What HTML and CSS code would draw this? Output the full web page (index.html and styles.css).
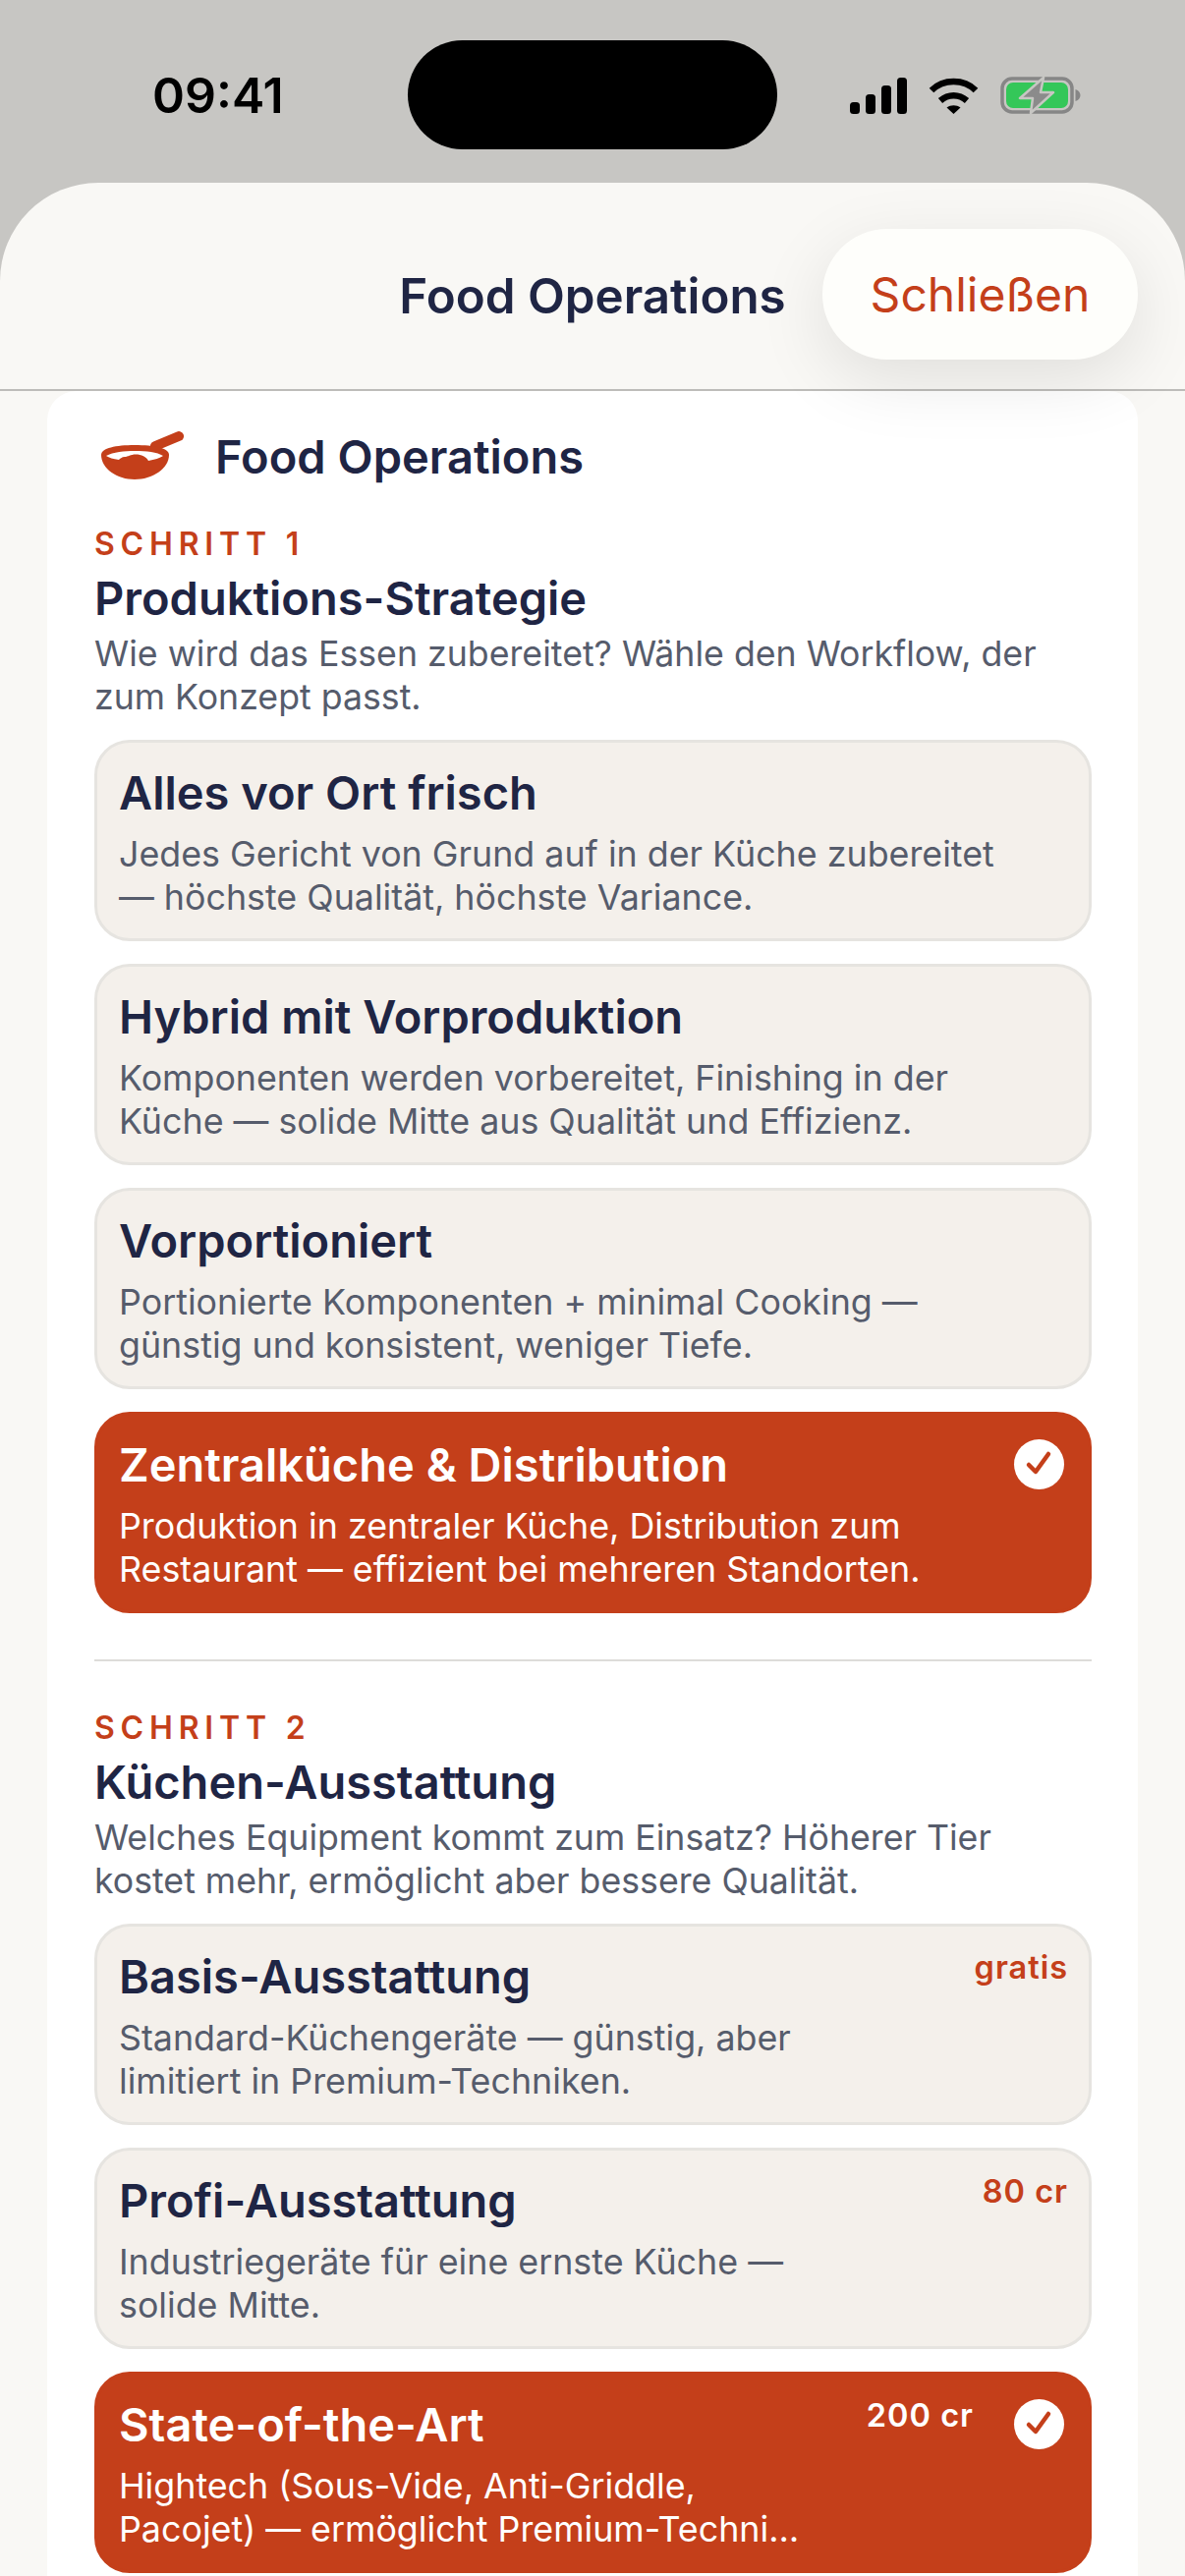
FILE: index.html
```html
<!DOCTYPE html>
<html lang="de">
  <head>
    <meta charset="UTF-8" />
    <meta name="viewport" content="width=device-width, initial-scale=1.0" />
    <title>Food Operations</title>
    <link rel="stylesheet" href="styles.css">
  </head>
  <body>
    <!-- Statusleiste -->
    <div class="status-bar">
      <div class="status-left"><span class="time">09:41</span></div>
      <div class="island"></div>
      <div class="status-right">
        <svg class="icon-signal" viewBox="0 0 58 37">
          <rect x="0" y="25" width="10" height="12" rx="3.5" />
          <rect x="16" y="17" width="10" height="20" rx="3.5" />
          <rect x="32" y="8" width="10" height="29" rx="3.5" />
          <rect x="48" y="0" width="10" height="37" rx="3.5" />
        </svg>
        <svg class="icon-wifi" viewBox="0 0 51 37">
          <path d="M3 13 C15 1 36 1 48 13" fill="none" stroke="#000" stroke-width="6.5" />
          <path d="M12 23.5 C20 16.5 31 16.5 39 23.5" fill="none" stroke="#000" stroke-width="6.5" />
          <path d="M18.5 30.5 C22.5 27.5 28.5 27.5 32.5 30.5 L25.5 37 Z" />
        </svg>
        <svg class="icon-battery" viewBox="0 0 82 38">
          <rect x="2" y="2" width="71" height="34" rx="10" fill="none" stroke="#868686" stroke-width="3.5" />
          <rect x="6" y="6" width="63" height="26" rx="7" fill="#34c759" />
          <path d="M76.5 13 C80 14 81.5 16.5 81.5 19 C81.5 21.5 80 24 76.5 25 Z" fill="#868686" />
          <path d="M44 1 L20 22 H33 L31 37 L54 16 H41 Z" fill="#8b8b8b" stroke="#c7c6c3" stroke-width="2.5" stroke-linejoin="round" />
        </svg>
      </div>
    </div>

    <div class="sheet">
      <header class="sheet-header">
        <h1>Food Operations</h1>
        <button class="close-btn">Schließen</button>
      </header>

      <main class="card">
        <div class="card-title">
          <svg class="icon-pan" viewBox="0 0 84 50">
            <path d="M55 15 L79 5" fill="none" stroke="#c43f1a" stroke-width="10" stroke-linecap="round" />
            <path d="M0 24 C0 17 15 14 34 14 C54 14 69 17 69 24 C69 38 52 49 34 49 C16 49 0 38 0 24 Z" fill="#c43f1a" />
            <path d="M5 25 C12 21 24 20 34 20 C46 20 57 21 63 25 C60 27 54 29 48 30 C46 26 41 23.5 35 23.5 C30 23.5 27 26 24 26 C21 26 19 28 18 29 C12 28 8 27 5 25 Z" fill="#fff" />
          </svg>
          <span>Food Operations</span>
        </div>

        <!-- Schritt 1 -->
        <section class="step">
          <div class="step-label">Schritt 1</div>
          <h2>Produktions-Strategie</h2>
          <p class="step-desc">Wie wird das Essen zubereitet? Wähle den Workflow, der zum Konzept passt.</p>

          <div class="options">
            <div class="option">
              <h3>Alles vor Ort frisch</h3>
              <p>Jedes Gericht von Grund auf in der Küche zubereitet — höchste Qualität, höchste Variance.</p>
            </div>
            <div class="option">
              <h3>Hybrid mit Vorproduktion</h3>
              <p>Komponenten werden vorbereitet, Finishing in der Küche — solide Mitte aus Qualität und Effizienz.</p>
            </div>
            <div class="option">
              <h3>Vorportioniert</h3>
              <p>Portionierte Komponenten + minimal Cooking — günstig und konsistent, weniger Tiefe.</p>
            </div>
            <div class="option selected">
              <h3>Zentralküche &amp; Distribution</h3>
              <p>Produktion in zentraler Küche, Distribution zum Restaurant — effizient bei mehreren Standorten.</p>
              <span class="check">
                <svg viewBox="0 0 51 51"><path d="M15 26 L22 33 L35 15" /></svg>
              </span>
            </div>
          </div>
        </section>

        <hr class="divider" />

        <!-- Schritt 2 -->
        <section class="step">
          <div class="step-label">Schritt 2</div>
          <h2>Küchen-Ausstattung</h2>
          <p class="step-desc">Welches Equipment kommt zum Einsatz? Höherer Tier kostet mehr, ermöglicht aber bessere Qualität.</p>

          <div class="options priced">
            <div class="option">
              <h3>Basis-Ausstattung</h3>
              <p>Standard-Küchengeräte — günstig, aber limitiert in Premium-Techniken.</p>
              <span class="price">gratis</span>
            </div>
            <div class="option">
              <h3>Profi-Ausstattung</h3>
              <p>Industriegeräte für eine ernste Küche — solide Mitte.</p>
              <span class="price">80 cr</span>
            </div>
            <div class="option selected">
              <h3>State-of-the-Art</h3>
              <p>Hightech (Sous-Vide, Anti-Griddle, Pacojet) — ermöglicht Premium-Techni…</p>
              <span class="price">200 cr</span>
              <span class="check">
                <svg viewBox="0 0 51 51"><path d="M15 26 L22 33 L35 15" /></svg>
              </span>
            </div>
          </div>
        </section>
      </main>
    </div>
  </body>
</html>
```

FILE: styles.css
```css
/* Общие стили */
html,
body {
  margin: 0;
  padding: 0;
  height: 2622px;
  overflow: hidden;
}

body {
  font-family: Inter, "Noto Sans", sans-serif;
  background-color: #c7c6c3;
  color: #1f2544;
}

h1,
h2,
h3,
p {
  margin: 0;
}

/* Статус бар */
.status-bar {
  display: flex;
  height: 186px;
  box-sizing: border-box;
  padding-top: 41px;
}

.status-left {
  width: 415px;
  box-sizing: border-box;
  padding: 26px 0 0 155px;
}

.time {
  font-size: 50px;
  line-height: 60px;
  font-weight: 600;
  color: #000;
  display: block;
}

.island {
  width: 376px;
  height: 111px;
  background-color: #000;
  border-radius: 56px;
}

.status-right {
  flex: 1;
  display: flex;
  align-items: flex-start;
  padding: 37px 0 0 74px;
}

.icon-signal {
  width: 58px;
  height: 37px;
  margin-top: 1px;
}

.icon-wifi {
  width: 51px;
  height: 37px;
  margin: 1px 22px 0 22px;
}

.icon-battery {
  width: 82px;
  height: 38px;
}

/* Шторка */
.sheet {
  height: 2436px;
  background-color: #f9f8f5;
  border-radius: 100px 100px 0 0;
}

.sheet-header {
  position: relative;
  z-index: 2;
  height: 212px;
  box-sizing: border-box;
  padding-top: 19px;
  display: flex;
  align-items: center;
  justify-content: center;
  border-bottom: 2px solid #bdbcb9;
}

.sheet-header h1 {
  font-size: 49.3px;
  font-weight: 600;
  line-height: 60px;
}

.close-btn {
  position: absolute;
  top: 47px;
  right: 48px;
  width: 321px;
  height: 133px;
  border: none;
  border-radius: 66px;
  background-color: #fefefb;
  color: #c43f1a;
  font-family: inherit;
  font-size: 48px;
  box-shadow: 0 20px 70px rgba(0, 0, 0, 0.1);
}

/* Карточка */
.card {
  margin: 0 48px;
  height: 2224px;
  box-sizing: border-box;
  padding: 0 47px 0 48px;
  background-color: #fff;
  border-radius: 30px 30px 0 0;
}

.card-title {
  display: flex;
  align-items: center;
  height: 90px;
  padding: 21px 0 0 7px;
  margin-bottom: 25px;
  font-size: 47px;
  font-weight: 600;
}

.icon-pan {
  width: 84px;
  height: 50px;
  margin-right: 32px;
}

.step-label {
  font-size: 32px;
  line-height: 40px;
  font-weight: 600;
  letter-spacing: 5.8px;
  text-transform: uppercase;
  color: #c43f1a;
}

.step h2 {
  font-size: 47px;
  line-height: 60px;
  font-weight: 600;
  margin-top: 5px;
}

.step-desc {
  font-size: 35.7px;
  line-height: 43.5px;
  color: #565c6c;
  margin-top: 5px;
}

.options {
  display: flex;
  flex-direction: column;
  gap: 23px;
  margin-top: 22px;
}

/* Варианты */
.option {
  position: relative;
  height: 205px;
  box-sizing: border-box;
  padding: 21px 72px 0 22px;
  background-color: #f4f0eb;
  border: 3px solid #e6e4e0;
  border-radius: 36px;
}

.priced .option {
  padding-right: 278px;
}

.option h3 {
  font-size: 47px;
  line-height: 60px;
  font-weight: 600;
  white-space: nowrap;
}

.option p {
  font-size: 35.8px;
  line-height: 43.5px;
  color: #565c6c;
  margin-top: 11px;
}

.option.selected {
  background-color: #c43f1a;
  border-color: #c43f1a;
  color: #fff;
}

.option.selected p {
  color: #fff;
}

.price {
  position: absolute;
  top: 22px;
  right: 21px;
  font-size: 32.5px;
  line-height: 40px;
  font-weight: 600;
  letter-spacing: 1px;
  color: #c43f1a;
}

.selected .price {
  right: 117px;
  color: #fff;
}

.check {
  position: absolute;
  top: 25px;
  right: 25px;
  width: 51px;
  height: 51px;
  border-radius: 50%;
  background-color: #fff;
}

.check svg {
  display: block;
  width: 51px;
  height: 51px;
}

.check path {
  fill: none;
  stroke: #c43f1a;
  stroke-width: 4.5;
  stroke-linecap: round;
  stroke-linejoin: round;
}

.divider {
  border: none;
  border-top: 2px solid #dddcd9;
  margin: 47px 0 48px;
}
```
